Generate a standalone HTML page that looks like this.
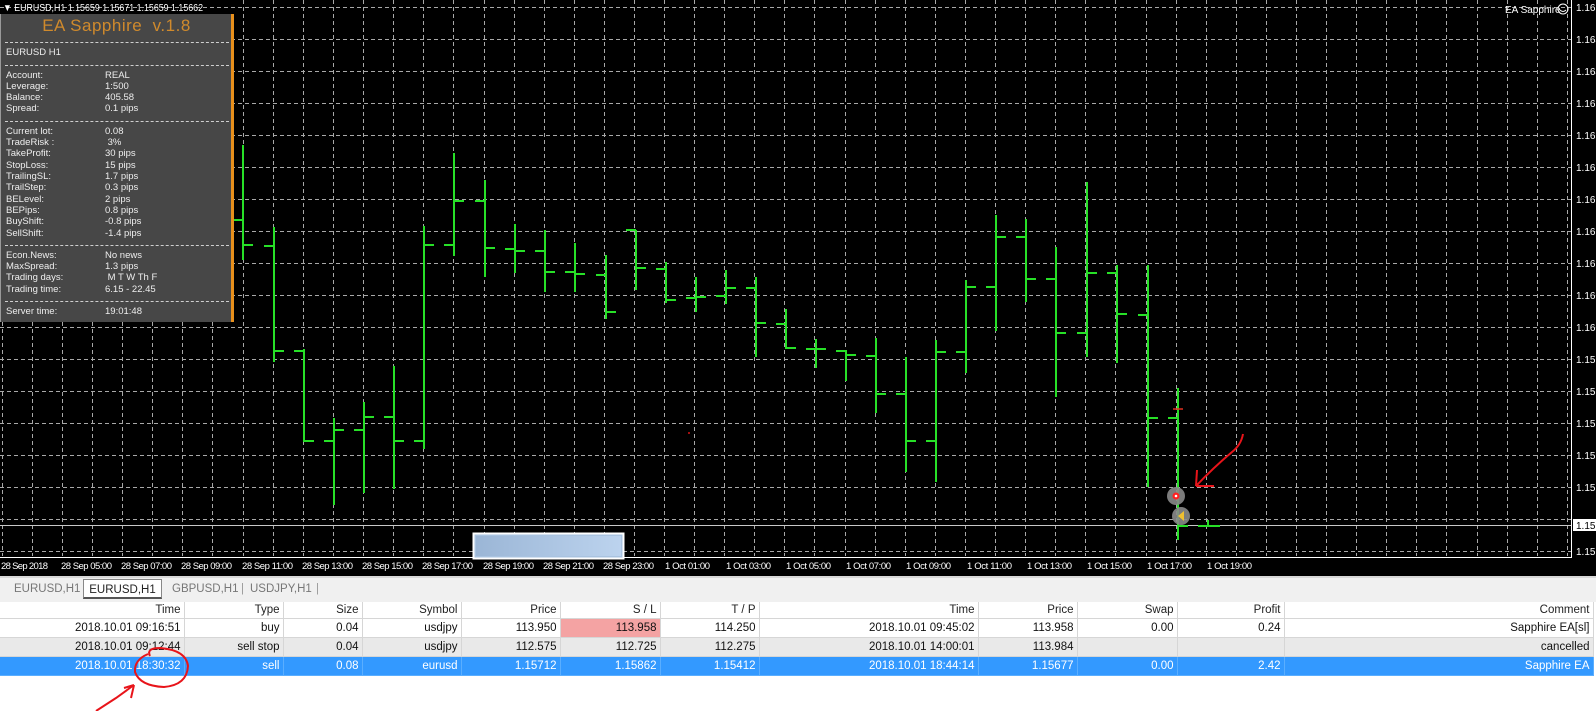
<!DOCTYPE html>
<html><head><meta charset="utf-8"><style>
html,body{margin:0;padding:0;width:1596px;height:711px;overflow:hidden;background:#fff;font-family:"Liberation Sans",sans-serif}
#chart{position:absolute;left:0;top:0}
.panel{position:absolute;left:0;top:14px;width:234px;height:308px;background:#474747;border-right:3px solid #e8901c;border-left:1px solid #9a9a9a;color:#eee;font-size:9.5px;box-sizing:border-box}
.panel .t{position:absolute;left:0;width:231px;top:2px;text-align:center;color:#d08a2c;font-size:17px;letter-spacing:0.5px}
.panel .r{position:absolute;left:5px;white-space:nowrap}
.panel .v{position:absolute;left:104px;white-space:nowrap}
.panel .d{position:absolute;left:4px;width:224px;border-top:1px dashed #cfcfcf}
.tabs{position:absolute;left:0;top:576px;width:1596px;height:26px;background:#f0f0f0;border-top:2px solid #d8d8d8;box-sizing:border-box;font-size:11.5px;color:#777}
.tab{position:absolute;top:3px;height:16px;line-height:16px}
table{position:absolute;left:0;top:602px;border-collapse:collapse;table-layout:fixed;font-size:11.5px}
td{height:18px;padding:0 3px 0 0;text-align:right;border-right:1px solid #d6d6d6;border-bottom:1px solid #d6d6d6;white-space:nowrap;overflow:hidden;color:#111}
tr.h td{height:16px;background:#fff;color:#222}
tr.g td{background:#e9e9e9}
tr.s td{background:#3399ff;color:#fff;border-color:#5aaeff}
</style></head><body>
<svg id="chart" width="1596" height="576" xmlns="http://www.w3.org/2000/svg" font-family="Liberation Sans, sans-serif">
<defs><linearGradient id="gr" x1="0" x2="1"><stop offset="0" stop-color="#9bb6d6"/><stop offset="1" stop-color="#bcd3ee"/></linearGradient></defs>
<rect width="1596" height="576" fill="#000"/>
<g stroke="#a8a8a8" stroke-width="1" stroke-dasharray="4,3" shape-rendering="crispEdges">
<path d="M2.5 14V556 M32.5 14V556 M62.5 14V556 M92.5 14V556 M122.5 14V556 M152.5 14V556 M182.5 14V556 M212.5 14V556 M243.5 0V556 M273.5 0V556 M303.5 0V556 M333.5 0V556 M363.5 0V556 M393.5 0V556 M423.5 0V556 M453.5 0V556 M484.5 0V556 M514.5 0V556 M544.5 0V556 M574.5 0V556 M604.5 0V556 M634.5 0V556 M664.5 0V556 M694.5 0V556 M724.5 0V556 M754.5 0V556 M784.5 0V556 M814.5 0V556 M845.5 0V556 M875.5 0V556 M905.5 0V556 M935.5 0V556 M965.5 0V556 M995.5 0V556 M1025.5 0V556 M1055.5 0V556 M1085.5 0V556 M1115.5 0V556 M1146.5 0V556 M1176.5 0V556 M1206.5 0V556 M1236.5 0V556 M1266.5 0V556 M1296.5 0V556 M1326.5 0V556 M1356.5 0V556 M1386.5 0V556 M1416.5 0V556 M1446.5 0V556 M1477.5 0V556 M1507.5 0V556 M1537.5 0V556 M1567.5 0V556"/>
<path d="M0 7.5H1571 M0 39.5H1571 M0 71.5H1571 M0 103.5H1571 M0 135.5H1571 M0 167.5H1571 M0 199.5H1571 M0 231.5H1571 M0 263.5H1571 M0 295.5H1571 M0 327.5H1571 M0 359.5H1571 M0 391.5H1571 M0 423.5H1571 M0 455.5H1571 M0 487.5H1571 M0 519.5H1571 M0 551.5H1571"/>
</g>
<path d="M0 525.5H1571" stroke="#c8c8c8" stroke-width="1"/>
<path d="M1571.5 0V558 M0 557.5H1572" stroke="#fff" stroke-width="1"/>
<g stroke="#27e027" stroke-width="2" fill="none" shape-rendering="crispEdges">
<path d="
M243 145V260M233 220H243M243 245H253
M274 227V362M264 246H274M274 351H284
M304 349V442M294 351H304M304 441H314
M334 418V505M324 441H334M334 430H344
M364 402V493M354 430H364M364 417H374
M394 366V489M384 417H394M394 441H404
M424 226V449M414 441H424M424 245H434
M454 153V256M444 245H454M454 201H464
M485 180V277M475 201H485M485 248H495
M515 224V273M505 249H515M515 251H525
M545 230V292M535 251H545M545 272H555
M575 243V292M565 272H575M575 274H585
M606 255V319M596 275H606M606 312H616
M636 230V290M626 230H636M636 268H646
M666 262V303M656 269H666M666 300H676
M696 277V312M686 298H696M696 297H706
M726 270V304M716 296H726M726 288H736
M756 277V357M746 288H756M756 323H766
M786 309V349M776 324H786M786 348H796
M816 339V368M806 349H816M816 349H826
M846 350V381M836 351H846M846 355H856
M876 338V413M866 356H876M876 394H886
M906 357V472M896 394H906M906 441H916
M936 340V482M926 441H936M936 352H946
M966 280V373M956 352H966M966 287H976
M996 215V331M986 287H996M996 237H1006
M1026 219V302M1016 237H1026M1026 279H1036
M1056 247V397M1046 279H1056M1056 333H1066
M1087 182V357M1077 333H1087M1087 273H1097
M1117 265V363M1107 273H1117M1117 314H1127
M1148 265V487M1138 315H1148M1148 418H1158
M1178 388V540M1168 418H1178M1178 526H1188
M1208 520V527M1198 526H1208M1208 526H1220"/>
</g>
<path d="M1173 409H1183" stroke="#e03020" stroke-width="1.5"/>
<rect x="688" y="432" width="2" height="2" fill="#a01010"/>
<circle cx="1176" cy="496" r="9" fill="#8a8a8a" opacity="0.9"/>
<circle cx="1176" cy="496" r="3.5" fill="#ff2020"/>
<circle cx="1176" cy="496" r="1.3" fill="#fff"/>
<circle cx="1181" cy="516" r="9" fill="#8a8a8a" opacity="0.9"/>
<path d="M1178 516L1184 511V521Z" fill="#f0c030"/>
<path d="M1243 434Q1241 445 1232 452Q1213 468 1196 486M1196 486H1214M1196 486L1197 470" stroke="#e8141a" stroke-width="2" fill="none"/>
<rect x="473.5" y="533.5" width="150" height="25" fill="#a9c3e0" stroke="#fff" stroke-width="2"/>
<rect x="476" y="536" width="145" height="20" fill="url(#gr)"/>
<text x="3" y="11" fill="#fff" font-size="10" textLength="200" lengthAdjust="spacingAndGlyphs">▼ EURUSD,H1  1.15659 1.15671 1.15659 1.15662</text>
<text x="1505" y="13" fill="#fff" font-size="10">EA Sapphire</text>
<circle cx="1563" cy="9" r="5" fill="none" stroke="#fff"/>
<path d="M1560 10Q1563 13 1566 10" stroke="#fff" fill="none"/>
<g fill="#fff" font-size="10">
<text x="1576" y="11">1.165</text><text x="1576" y="43">1.164</text><text x="1576" y="75">1.164</text><text x="1576" y="107">1.163</text><text x="1576" y="139">1.163</text><text x="1576" y="171">1.162</text><text x="1576" y="203">1.162</text><text x="1576" y="235">1.161</text><text x="1576" y="267">1.161</text><text x="1576" y="299">1.160</text><text x="1576" y="331">1.160</text><text x="1576" y="363">1.159</text><text x="1576" y="395">1.158</text><text x="1576" y="427">1.158</text><text x="1576" y="459">1.157</text><text x="1576" y="491">1.157</text><text x="1576" y="555">1.156</text>
</g>
<rect x="1573" y="519" width="23" height="12" fill="#fff"/>
<text x="1576" y="529" fill="#000" font-size="10">1.156</text>
<g fill="#fff" font-size="9.5" lengthAdjust="spacingAndGlyphs">
<text x="1" y="569" textLength="47">28 Sep 2018</text><text x="61" y="569" textLength="51">28 Sep 05:00</text><text x="121" y="569" textLength="51">28 Sep 07:00</text><text x="181" y="569" textLength="51">28 Sep 09:00</text><text x="242" y="569" textLength="51">28 Sep 11:00</text><text x="302" y="569" textLength="51">28 Sep 13:00</text><text x="362" y="569" textLength="51">28 Sep 15:00</text><text x="422" y="569" textLength="51">28 Sep 17:00</text><text x="483" y="569" textLength="51">28 Sep 19:00</text><text x="543" y="569" textLength="51">28 Sep 21:00</text><text x="603" y="569" textLength="51">28 Sep 23:00</text><text x="665" y="569" textLength="45">1 Oct 01:00</text><text x="726" y="569" textLength="45">1 Oct 03:00</text><text x="786" y="569" textLength="45">1 Oct 05:00</text><text x="846" y="569" textLength="45">1 Oct 07:00</text><text x="906" y="569" textLength="45">1 Oct 09:00</text><text x="967" y="569" textLength="45">1 Oct 11:00</text><text x="1027" y="569" textLength="45">1 Oct 13:00</text><text x="1087" y="569" textLength="45">1 Oct 15:00</text><text x="1147" y="569" textLength="45">1 Oct 17:00</text><text x="1207" y="569" textLength="45">1 Oct 19:00</text>
</g>
</svg>
<div class="panel">
<div class="t">EA Sapphire&nbsp; v.1.8</div>
<div class="d" style="top:28px"></div>
<div class="r" style="top:33px">EURUSD H1</div>
<div class="d" style="top:51px"></div>
<div class="r" style="top:56px">Account:</div><div class="v" style="top:56px">REAL</div>
<div class="r" style="top:67px">Leverage:</div><div class="v" style="top:67px">1:500</div>
<div class="r" style="top:78px">Balance:</div><div class="v" style="top:78px">405.58</div>
<div class="r" style="top:89px">Spread:</div><div class="v" style="top:89px">0.1 pips</div>
<div class="d" style="top:107px"></div>
<div class="r" style="top:112px">Current lot:</div><div class="v" style="top:112px">0.08</div>
<div class="r" style="top:123px">TradeRisk :</div><div class="v" style="top:123px">&nbsp;3%</div>
<div class="r" style="top:134px">TakeProfit:</div><div class="v" style="top:134px">30 pips</div>
<div class="r" style="top:146px">StopLoss:</div><div class="v" style="top:146px">15 pips</div>
<div class="r" style="top:157px">TrailingSL:</div><div class="v" style="top:157px">1.7 pips</div>
<div class="r" style="top:168px">TrailStep:</div><div class="v" style="top:168px">0.3 pips</div>
<div class="r" style="top:180px">BELevel:</div><div class="v" style="top:180px">2 pips</div>
<div class="r" style="top:191px">BEPips:</div><div class="v" style="top:191px">0.8 pips</div>
<div class="r" style="top:202px">BuyShift:</div><div class="v" style="top:202px">-0.8 pips</div>
<div class="r" style="top:214px">SellShift:</div><div class="v" style="top:214px">-1.4 pips</div>
<div class="d" style="top:231px"></div>
<div class="r" style="top:236px">Econ.News:</div><div class="v" style="top:236px">No news</div>
<div class="r" style="top:247px">MaxSpread:</div><div class="v" style="top:247px">1.3 pips</div>
<div class="r" style="top:258px">Trading days:</div><div class="v" style="top:258px">&nbsp;M T W Th F</div>
<div class="r" style="top:270px">Trading time:</div><div class="v" style="top:270px">6.15 - 22.45</div>
<div class="d" style="top:287px"></div>
<div class="r" style="top:292px">Server time:</div><div class="v" style="top:292px">19:01:48</div>
</div>
<div class="tabs">
<div class="tab" style="left:14px">EURUSD,H1</div>
<div class="tab" style="left:83px;top:1px;width:79px;height:20px;line-height:20px;background:#fff;border:1px solid #888;border-bottom:2px solid #555;color:#222;text-align:center;box-sizing:border-box">EURUSD,H1</div>
<div class="tab" style="left:172px">GBPUSD,H1</div>
<div class="tab" style="left:241px;color:#999">|</div>
<div class="tab" style="left:250px">USDJPY,H1</div>
<div class="tab" style="left:316px;color:#999">|</div>
</div>
<table>
<colgroup><col style="width:184px"><col style="width:99px"><col style="width:79px"><col style="width:99px"><col style="width:99px"><col style="width:100px"><col style="width:99px"><col style="width:219px"><col style="width:99px"><col style="width:100px"><col style="width:107px"><col style="width:309px"></colgroup>
<tr class="h"><td>Time</td><td>Type</td><td>Size</td><td>Symbol</td><td>Price</td><td>S / L</td><td>T / P</td><td>Time</td><td>Price</td><td>Swap</td><td>Profit</td><td>Comment</td></tr>
<tr><td>2018.10.01 09:16:51</td><td>buy</td><td>0.04</td><td>usdjpy</td><td>113.950</td><td style="background:#f4a3a3">113.958</td><td>114.250</td><td>2018.10.01 09:45:02</td><td>113.958</td><td>0.00</td><td>0.24</td><td>Sapphire EA[sl]</td></tr>
<tr class="g"><td>2018.10.01 09:12:44</td><td>sell stop</td><td>0.04</td><td>usdjpy</td><td>112.575</td><td>112.725</td><td>112.275</td><td>2018.10.01 14:00:01</td><td>113.984</td><td></td><td></td><td>cancelled</td></tr>
<tr class="s"><td>2018.10.01 18:30:32</td><td>sell</td><td>0.08</td><td>eurusd</td><td>1.15712</td><td>1.15862</td><td>1.15412</td><td>2018.10.01 18:44:14</td><td>1.15677</td><td>0.00</td><td>2.42</td><td>Sapphire EA</td></tr>
</table>
<svg style="position:absolute;left:0;top:630px" width="300" height="81">
<path d="M150 26Q146 18 160 18Q186 20 188 36Q187 55 164 57Q140 56 135 42Q134 30 148 24" stroke="#e8141a" stroke-width="2" fill="none"/>
<path d="M96 81L116 68L134 55M134 55L131 68M134 55L124 58" stroke="#e8141a" stroke-width="2" fill="none"/>
</svg>
</body></html>
